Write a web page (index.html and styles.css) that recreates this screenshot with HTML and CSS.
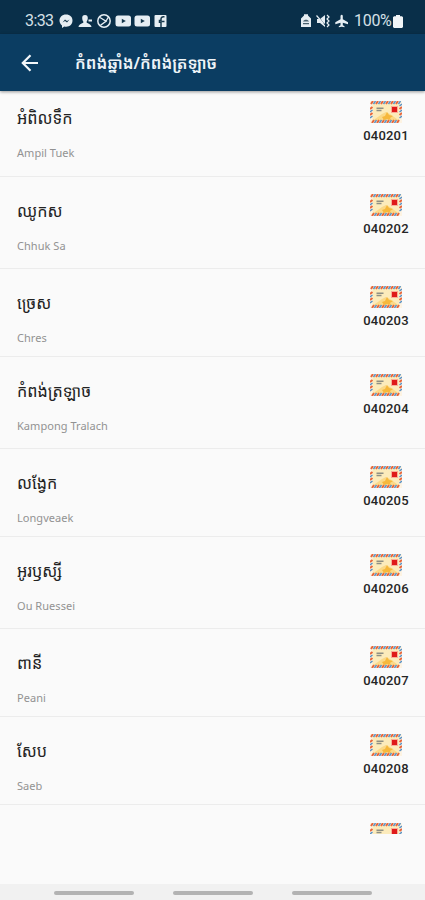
FILE: index.html
```
<!DOCTYPE html>
<html lang="km">
<head>
<meta charset="utf-8">
<title>កំពង់ឆ្នាំង/កំពង់ត្រឡាច</title>
<link rel="stylesheet" href="styles.css">
</head>
<body>
<svg class="defs" width="0" height="0" aria-hidden="true">
  <symbol id="envelope" viewBox="0 0 32 22">
    <rect width="32" height="22" fill="#fdf3e2"/>
    <rect x="2.500" y="2.500" width="27" height="17" fill="#fcebbb"/>
    <path d="M3 19.500 12 13l4-2 4 2 9 6.500z" fill="#fbd987"/>
    <path d="m12 16 3-1 2-4 2 3 4 1-3 2 1 2-4-1-3 1z" fill="#f6b83c"/>
    <path d="M1 3 3 0M6 3l2-3M11 3l2-3M16 3l2-3M21 3l2-3M26 3l2-3M2 22l2-3M7 22l2-3M12 22l2-3M17 22l2-3M22 22l2-3M27 22l2-3M0 8l2.500-2M0 14l2.500-2M29.500 8 32 6M29.500 14l2.500-2" stroke="#e8663a" stroke-width="2"/>
    <path d="m3.500 3 2-3M8.500 3l2-3M13.500 3l2-3M18.500 3l2-3M23.500 3l2-3M28.500 3l2-3M4.500 22l2-3M9.500 22l2-3M14.500 22l2-3M19.500 22l2-3M24.500 22l2-3M0 11l2.500-2M0 17l2.500-2M29.500 5 32 3M29.500 11 32 9M29.500 17l2.500-2" stroke="#5b93c4" stroke-width="1.500"/>
    <path d="M6.500 7.200h7M6.500 9.500h5" stroke="#8f9084" stroke-width="1.400"/>
    <rect x="21" y="5" width="7" height="7" fill="#f9ad98"/>
    <rect x="22" y="6" width="5" height="5" fill="#df1a1a"/>
  </symbol>
</svg>
<div class="screen">
  <header class="status">
    <span class="clock">3:33</span>
    <svg class="notif" width="108" height="14" viewBox="0 0 108 14" fill="#e6eef3">
      <path d="M7 .5C3 .5.500 3.200.500 6.500c0 2 1 3.800 2.500 5V14l2.300-1.500c4.900 1 8.200-2 8.200-6C13.500 3 11 .5 7 .5z"/>
      <path d="m3.500 8.500 2.500-3 2 1.500 2.500-1.500L8 8.500 6 7z" fill="#16384d"/>
      <path d="M26 1c2 0 2.800 1.200 2.800 3S28 7 27.500 8c0 1.500 4.500 1.500 5 5H19.500c.5-3.500 5-3.500 5-5-.6-1-1.300-2-1.300-4S24 1 26 1zM29.500 5.500h3.500v2h-3.500z"/>
      <circle cx="45" cy="7" r="6.200" fill="none" stroke="#e6eef3" stroke-width="1.500"/>
      <path d="m41 3.500 6 3.700-5.500 4M49.500 3l-2.500 4" fill="none" stroke="#e6eef3" stroke-width="1.400"/>
      <rect x="56.500" y="1.500" width="15.500" height="11" rx="2.500"/>
      <path d="M62.800 4.700v4.600l4-2.300z" fill="#16384d"/>
      <rect x="75.500" y="1.500" width="15.500" height="11" rx="2.500"/>
      <path d="M81.800 4.700v4.600l4-2.300z" fill="#16384d"/>
      <rect x="95.500" y="1" width="12" height="12" rx="1"/>
      <path d="M102 13V8.200h-1.500V6.500h1.500V5c0-1.500 1-2.200 2.400-2.200h1.100M102.500 7.500h3" fill="none" stroke="#16384d" stroke-width="1.500"/>
    </svg>
    <svg class="system" width="48" height="14" viewBox="0 0 48 14" fill="#e6eef3">
      <path d="M3 1.500V.300h4v1.200l3 3V13H0V4.500z"/>
      <path d="M2 7.500c1-2.500 5-2.500 6 0zM2 9h6v1.200H2z" fill="#48616f"/>
      <path d="M16 5h3l5-4v12l-5-4h-3z"/>
      <path d="m16 1 9 11" stroke="#092f49" stroke-width="1"/>
      <path d="m15.500 1.500 7 8" stroke="#e6eef3" stroke-width="1.200"/>
      <path d="m26 1 2 2-2 2 2 2-2 2 2 2-2 2" fill="none" stroke="#e6eef3" stroke-width="1.200"/>
      <path d="M39.500 1.800c.7-1.500 1.900-1.500 2.300 0V5.300l5.200 3v1.900l-5.200-1.500v2.600l1.700 1v1L40.700 12.700l-2.900.6v-1l1.700-1V8.700l-5.200 1.500V8.300l5.200-3z"/>
    </svg>
    <span class="percent">100%</span>
    <svg class="battery" width="10" height="13" viewBox="0 0 10 13"><path d="M3 1.300V0h4v1.300h2l1 1V12l-1 1H1l-1-1V2.300l1-1z" fill="#f1f5f7"/></svg>
  </header>
  <nav class="bar">
    <svg class="back" width="18" height="18" viewBox="0 0 18 18" fill="none" stroke="#f3f7fa" stroke-width="2.200"><path d="M17 9H2M9.500 1.300 1.800 9l7.700 7.700"/></svg>
    <h1>កំពង់ឆ្នាំង/កំពង់ត្រឡាច</h1>
  </nav>
  <main class="list">
    <article class="row first"><div><h2>អំពិលទឹក</h2><p>Ampil Tuek</p></div><div class="post"><svg><use href="#envelope"/></svg><b>040201</b></div></article>
    <article class="row tall"><div><h2>ឈូកស</h2><p>Chhuk Sa</p></div><div class="post"><svg><use href="#envelope"/></svg><b>040202</b></div></article>
    <article class="row"><div><h2>ច្រេស</h2><p>Chres</p></div><div class="post"><svg><use href="#envelope"/></svg><b>040203</b></div></article>
    <article class="row tall"><div><h2>កំពង់ត្រឡាច</h2><p>Kampong Tralach</p></div><div class="post"><svg><use href="#envelope"/></svg><b>040204</b></div></article>
    <article class="row"><div><h2>លង្វែក</h2><p>Longveaek</p></div><div class="post"><svg><use href="#envelope"/></svg><b>040205</b></div></article>
    <article class="row tall"><div><h2>អូរឫស្សី</h2><p>Ou Ruessei</p></div><div class="post"><svg><use href="#envelope"/></svg><b>040206</b></div></article>
    <article class="row"><div><h2>ពានី</h2><p>Peani</p></div><div class="post"><svg><use href="#envelope"/></svg><b>040207</b></div></article>
    <article class="row"><div><h2>សែប</h2><p>Saeb</p></div><div class="post"><svg><use href="#envelope"/></svg><b>040208</b></div></article>
    <article class="row last"><div></div><div class="post"><svg><use href="#envelope"/></svg></div></article>
  </main>
  <footer class="gestures"><i></i><i></i><i></i></footer>
</div>
</body>
</html>
```
FILE: styles.css
```
* { box-sizing: border-box; margin: 0; padding: 0; }
body { background: #fafafa; font-family: "Noto Sans", "Noto Sans Khmer", "Khmer OS", sans-serif; }
.defs { display: block; height: 0; }
.screen { width: 425px; height: 900px; display: flex; flex-direction: column; overflow: hidden; }
.status { height: 34px; flex: none; display: flex; align-items: center; padding: 8px 22px 0 25px; background: #092f49; color: #d5e0e7; z-index: 2; }
.clock { width: 34px; font: 16px/20px Roboto, sans-serif; letter-spacing: -.6px; }
.system { margin-left: auto; }
.percent { width: 38px; margin: 0 1px 0 5px; font: 16px/20px Roboto, sans-serif; letter-spacing: -.3px; }
.bar { height: 57px; flex: none; display: flex; align-items: center; padding-left: 21px; background: #0b3d62; box-shadow: 0 1px 3px rgba(0, 0, 0, .4); z-index: 2; }
.bar h1 { margin-left: 36px; color: #eef4f8; font-size: 16.200px; line-height: 24px; font-weight: 600; white-space: nowrap; }
.list { height: 743px; flex: none; overflow: hidden; }
.row { height: 88.200px; display: flex; justify-content: space-between; padding: 17px 15px 0 17px; border-bottom: 1px solid #ececec; }
.row.tall { height: 92px; }
.row.first { height: 85.500px; padding-top: 10px; }
.row h2 { margin-top: 5px; height: 24px; color: #222; font-size: 16.200px; line-height: 24px; font-weight: 400; white-space: nowrap; }
.row p { margin-top: 15px; color: #929292; font-size: 11px; line-height: 16px; letter-spacing: .04px; }
.post { width: 48px; display: flex; flex-direction: column; align-items: center; }
.post svg { width: 32px; height: 22px; flex: none; }
.post b { margin-top: 5px; color: #252525; font: 500 13px/16px Roboto, sans-serif; letter-spacing: .2px; }
.row.last { height: 29px; padding-top: 18px; border: 0; overflow: hidden; }
.gestures { height: 16px; margin-top: auto; flex: none; display: flex; justify-content: center; gap: 39px; padding-top: 7px; background: #f1f1f1; }
.gestures i { width: 80px; height: 4px; border-radius: 2px; background: #b3b3b3; }
```
